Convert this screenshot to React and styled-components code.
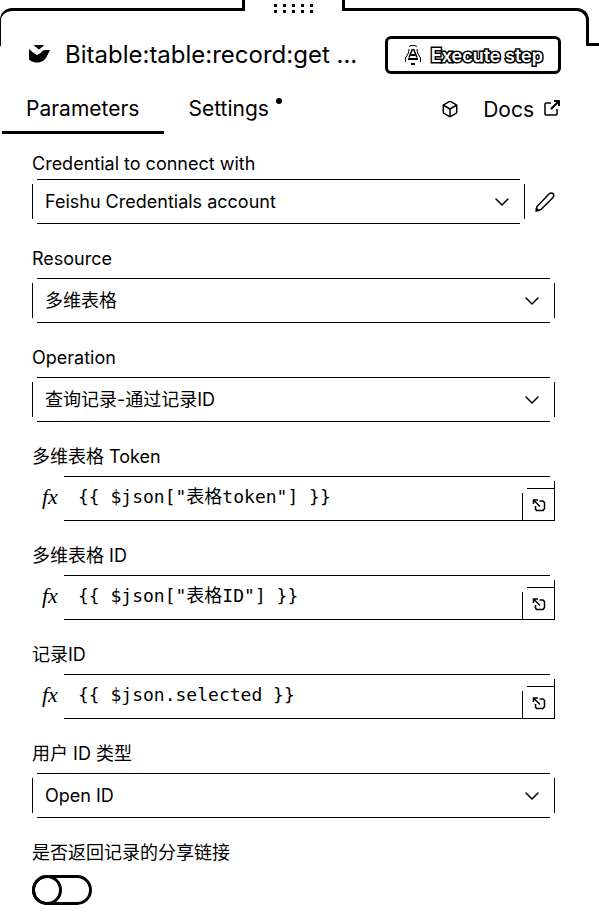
import React from "react";
import styled, { createGlobalStyle } from "styled-components";
import { Box, ChevronDown } from "lucide-react";

const INK = "#000";
const SANS = `Inter, "Noto Sans CJK SC", sans-serif`;
const MONO = `"DejaVu Sans Mono", "Noto Sans CJK SC", monospace`;

const GlobalStyle = createGlobalStyle`
  *, *::before, *::after { box-sizing: border-box; }
  body { margin: 0; background: #fff; color: ${INK}; font-family: ${SANS}; }
  button, input, select, textarea { font: inherit; color: inherit; }
`;

const Panel = styled.main`
  display: flex;
  flex-direction: column;
  padding-bottom: 6px;
`;

const Top = styled.div`
  display: grid;
  > * { grid-area: 1 / 1; }
`;

const Frame = styled.div`
  display: flex;
  align-items: flex-start;
  height: 46px;
  pointer-events: none;
`;

const Edge = styled.div`
  flex: 1;
  height: 38px;
  margin-top: 8px;
  border-top: 3px solid ${INK};
  ${({ $side }) =>
    $side === "left"
      ? `border-left: 1px solid ${INK}; border-top-left-radius: 12px;`
      : `border-right: 3px solid ${INK}; border-top-right-radius: 12px;`}
`;

const Grip = styled.div`
  display: flex;
  justify-content: center;
  width: 103px;
  height: 11px;
  border: solid ${INK};
  border-width: 0 3px;
`;

const GripDots = styled.div`
  display: grid;
  grid-template-columns: repeat(5, 3px);
  grid-auto-rows: 3px;
  gap: 3px 6px;
  padding-top: 4px;
`;

const Dot = styled.i`
  background: ${INK};
`;

const Tail = styled.div`
  width: 10px;
  height: 3px;
  margin-top: 43px;
  background: ${INK};
`;

const Header = styled.header`
  display: flex;
  align-items: center;
  gap: 14px;
  padding: 36px 38px 0 28px;
`;

const Title = styled.h1`
  flex: 1;
  margin: 0;
  font-size: 24px;
  font-weight: 400;
  line-height: 30px;
  white-space: nowrap;
`;

const ExecuteButton = styled.button`
  display: flex;
  align-items: center;
  gap: 9px;
  height: 38px;
  padding: 0 15px 0 16px;
  border: 3px solid ${INK};
  border-radius: 6px;
  background: #fff;
  color: #fff;
  font-size: 18px;
  font-weight: 600;
  white-space: nowrap;
  -webkit-text-stroke: 3px ${INK};
  paint-order: stroke fill;
`;

const Tabs = styled.nav`
  display: flex;
  align-items: flex-start;
  margin-top: 14px;
  padding: 0 38px 0 2px;
`;

const Tab = styled.button`
  position: relative;
  height: 46px;
  padding: 0 25px 3px 24px;
  border: 0;
  border-bottom: 3px solid ${({ $active }) => ($active ? INK : "transparent")};
  background: none;
  font-size: 21px;
  line-height: 37px;
`;

const Badge = styled.span`
  position: absolute;
  top: 10px;
  right: 12px;
  width: 6px;
  height: 6px;
  border-radius: 50%;
  background: ${INK};
`;

const TabLinks = styled.div`
  display: flex;
  align-items: center;
  gap: 24px;
  height: 42px;
  margin-left: auto;
`;

const DocsLink = styled.a`
  display: flex;
  align-items: center;
  gap: 9px;
  color: inherit;
  font-size: 21px;
  text-decoration: none;
`;

const Form = styled.form`
  display: flex;
  flex-direction: column;
  gap: 22px;
  padding: 17px 44px 0 32px;
`;

const Field = styled.div`
  display: flex;
  flex-direction: column;
  gap: ${({ $gap = 8 }) => $gap}px;
`;

const Label = styled.label`
  height: 24px;
  font-size: 18px;
  line-height: 26px;
`;

const Line = styled.div`
  display: flex;
  align-items: center;
  gap: 9px;
`;

const ink = `linear-gradient(${INK}, ${INK})`;

const SelectBox = styled.div`
  display: grid;
  flex: 1;
  align-items: center;
  height: 45px;
  background:
    ${ink} 5px 0 / calc(100% - 10px) 1px no-repeat,
    ${ink} 5px 100% / calc(100% - 10px) 1px no-repeat,
    ${ink} 0 5px / 1px calc(100% - 10px) no-repeat,
    ${ink} 100% 5px / 1px calc(100% - 10px) no-repeat;
  > * { grid-area: 1 / 1; }
  > svg { justify-self: end; margin-right: 11px; pointer-events: none; }
`;

const Select = styled.select`
  width: 100%;
  height: 45px;
  padding: 0 40px 0 13px;
  border: 0;
  background: none;
  appearance: none;
  font-size: 18px;
`;

const IconButton = styled.button`
  display: flex;
  padding: 0;
  border: 0;
  background: none;
`;

const ExpressionBox = styled.div`
  display: flex;
  height: 45px;
`;

const Fx = styled.span`
  width: 32px;
  padding-left: 10px;
  font-family: "Liberation Serif", serif;
  font-size: 22px;
  font-style: italic;
  line-height: 42px;
`;

const ExpressionBody = styled.div`
  display: flex;
  flex: 1;
  align-items: flex-end;
  background:
    ${ink} 0 0 / calc(100% - 5px) 1px no-repeat,
    ${ink} 0 100% / 100% 1px no-repeat,
    ${ink} 100% 5px / 1px calc(100% - 5px) no-repeat;
`;

const ExpressionInput = styled.textarea`
  flex: 1;
  min-width: 0;
  height: 45px;
  padding: 9px 0 0 14px;
  border: 0;
  background: none;
  resize: none;
  overflow: hidden;
  white-space: pre;
  && {
    font-family: ${MONO};
    font-size: 18px;
    line-height: 24px;
  }
`;

const ExpandButton = styled.button`
  display: flex;
  align-items: center;
  justify-content: center;
  width: 33px;
  height: 33px;
  padding: 0;
  border: 0;
  background:
    ${ink} 5px 0 / 100% 1px no-repeat,
    ${ink} 0 5px / 1px 100% no-repeat;
`;

const Toggle = styled.input`
  appearance: none;
  width: 60px;
  height: 30px;
  margin: 0;
  border: 3px solid ${INK};
  border-radius: 15px;
  background: #fff;
  &::before {
    content: "";
    display: block;
    width: 30px;
    height: 30px;
    margin: -3px;
    border: 3px solid ${INK};
    border-radius: 50%;
  }
  &:checked::before { margin-left: 27px; }
`;

const NodeLogo = () => (
  <svg width="23" height="22" viewBox="0 0 23 22" aria-hidden="true">
    <path d="M5.500 1H15.500V2L11 5.500L9 4Z" fill={INK} />
    <path d="M1 5L5 8.500L9 11L12 9.500L15 6.500L18 6L22 6L20 10L18 14L15 17L11 18.500H7L3 17L1 15.500Z" fill={INK} />
  </svg>
);

const FlaskIcon = () => (
  <svg width="18" height="22" viewBox="0 0 18 22" fill="none" stroke={INK} aria-hidden="true">
    <path d="M5 2.500L7 1.500H11L13 2.500" strokeWidth="1" />
    <path d="M5 5L4.500 9L1.500 14V18M13 5L13.500 9L16.500 14V18" strokeWidth="1" />
    <path d="M8.500 5L5 13.500M9.500 5L13 13.500" strokeWidth="1.500" />
    <path d="M6.500 11H11.500M4 15H14M7 20H11" strokeWidth="2" />
  </svg>
);

const DocsIcon = () => (
  <svg width="18" height="20" viewBox="0 0 18 20" fill="none" stroke={INK} strokeWidth="1.500" strokeLinejoin="round" aria-hidden="true">
    <path d="M8 4H3Q2 4 2 5V15Q2 16 3 16H13Q14 16 14 15V10" />
    <path d="M11 2H16V7M16 2L8 10" strokeWidth="2" />
  </svg>
);

const PencilIcon = () => (
  <svg width="21" height="22" viewBox="0 0 21 22" fill="none" stroke={INK} strokeWidth="1.500" strokeLinejoin="round" aria-hidden="true">
    <path d="M2 20L3 15.500L15 3Q17 1.500 19 2.500Q20.500 4.500 19 6.500L7 18.500Z" />
    <path d="M2 17L5 20" />
  </svg>
);

const ExpandIcon = () => (
  <svg width="14" height="14" viewBox="0 0 14 14" fill="none" stroke={INK} strokeWidth="1.500" aria-hidden="true">
    <path d="M1.500 6V2H6M1.500 2L8 8.500" />
    <path d="M7.500 3H11L12.500 4.500V10.500L11 12.500H4.500L3.500 11V8" />
  </svg>
);

function SelectField({ id, label, value, gap, action }) {
  return (
    <Field $gap={gap}>
      <Label htmlFor={id}>{label}</Label>
      <Line>
        <SelectBox>
          <Select id={id} defaultValue={value}>
            <option>{value}</option>
          </Select>
          <ChevronDown size={24} strokeWidth={1.5} />
        </SelectBox>
        {action}
      </Line>
    </Field>
  );
}

function ExpressionField({ id, label, value }) {
  return (
    <Field>
      <Label htmlFor={id}>{label}</Label>
      <ExpressionBox>
        <Fx>fx</Fx>
        <ExpressionBody>
          <ExpressionInput id={id} rows={1} defaultValue={value} spellCheck={false} />
          <ExpandButton type="button" aria-label="Expand editor">
            <ExpandIcon />
          </ExpandButton>
        </ExpressionBody>
      </ExpressionBox>
    </Field>
  );
}

export default function App() {
  return (
    <>
      <GlobalStyle />
      <Panel>
        <Top>
          <Frame>
            <Edge $side="left" />
            <Grip>
              <GripDots>
                {Array.from({ length: 10 }, (_, i) => (
                  <Dot key={i} />
                ))}
              </GripDots>
            </Grip>
            <Edge $side="right" />
            <Tail />
          </Frame>
          <Header>
            <NodeLogo />
            <Title>Bitable:table:record:get ...</Title>
            <ExecuteButton type="button">
              <FlaskIcon />
              Execute step
            </ExecuteButton>
          </Header>
        </Top>
        <Tabs>
          <Tab type="button" $active>Parameters</Tab>
          <Tab type="button">
            Settings
            <Badge />
          </Tab>
          <TabLinks>
            <Box size={18} strokeWidth={2} />
            <DocsLink href="#docs">
              Docs
              <DocsIcon />
            </DocsLink>
          </TabLinks>
        </Tabs>
        <Form>
          <SelectField
            id="credential"
            label="Credential to connect with"
            value="Feishu Credentials account"
            gap={4}
            action={
              <IconButton type="button" aria-label="Edit credential">
                <PencilIcon />
              </IconButton>
            }
          />
          <SelectField id="resource" label="Resource" value="多维表格" />
          <SelectField id="operation" label="Operation" value="查询记录-通过记录ID" />
          <ExpressionField id="token" label="多维表格 Token" value={'{{ $json["表格token"] }}'} />
          <ExpressionField id="table" label="多维表格 ID" value={'{{ $json["表格ID"] }}'} />
          <ExpressionField id="record" label="记录ID" value="{{ $json.selected }}" />
          <SelectField id="user-type" label="用户 ID 类型" value="Open ID" />
          <Field $gap={11}>
            <Label htmlFor="share-link">是否返回记录的分享链接</Label>
            <Toggle id="share-link" type="checkbox" role="switch" />
          </Field>
        </Form>
      </Panel>
    </>
  );
}
